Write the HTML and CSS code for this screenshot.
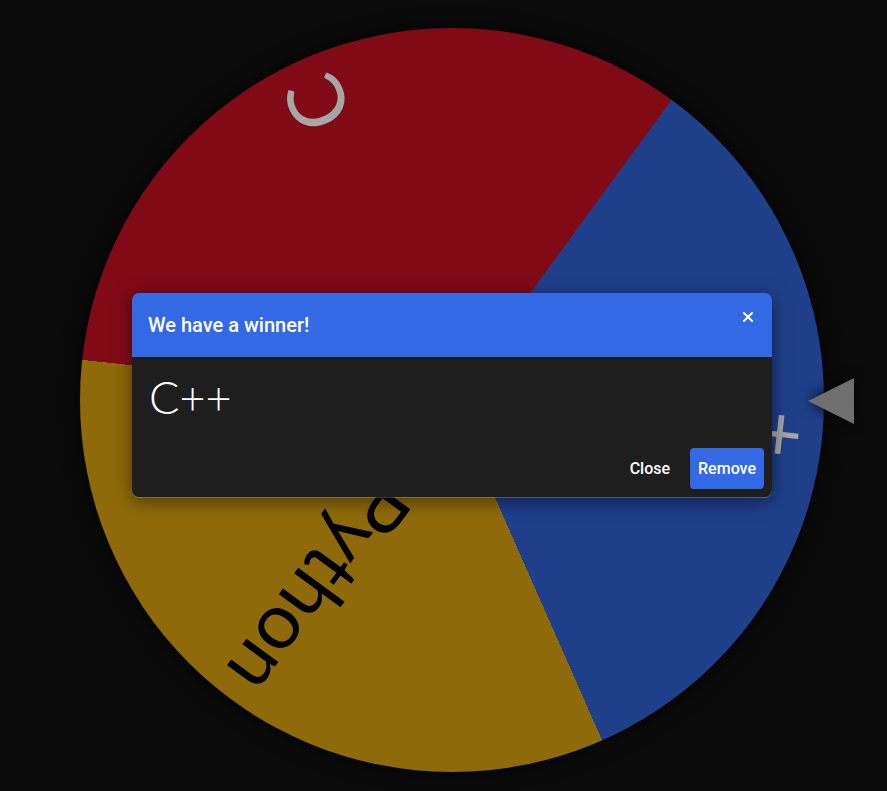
FILE: index.html
```html
<!DOCTYPE html>
<html lang="en">
<head>
<meta charset="utf-8">
<title>Wheel</title>
<link rel="stylesheet" href="styles.css">
</head>
<body>
<main class="stage">
  <div class="wheel">
    <div class="label label-red"><span>C</span></div>
    <div class="label label-blue"><span>C++</span></div>
    <div class="label label-yellow"><span>Python</span></div>
  </div>
  <svg class="pointer" width="48" height="50" viewBox="0 0 48 50">
    <polygon points="1,25 47,2 47,48" fill="#6f6f6f"/>
  </svg>
</main>

<div class="modal">
  <section class="dialog">
    <header class="dialog-header">
      <h2 class="dialog-title">We have a winner!</h2>
      <button class="dialog-x" aria-label="Close">
        <svg width="10" height="10" viewBox="0 0 10 10"><path d="M1 1L9 9M9 1L1 9" stroke="#fff" stroke-width="2" stroke-linecap="square"/></svg>
      </button>
    </header>
    <div class="dialog-body">C++</div>
    <footer class="dialog-footer">
      <button class="btn btn-text">Close</button>
      <button class="btn btn-primary">Remove</button>
    </footer>
  </section>
</div>
</body>
</html>
```
FILE: styles.css
```css
html, body {
  margin: 0;
  padding: 0;
  background: #0b0b0b;
  width: 887px;
  height: 791px;
  overflow: hidden;
}

.stage {
  display: flex;
  align-items: center;
  padding: 28px 0 0 80px;
}

.wheel {
  position: relative;
  flex: none;
  width: 744px;
  height: 744px;
  border-radius: 50%;
  background: conic-gradient(from 36.2deg,
    #1f3f8b 0deg 120deg,
    #8e6a0a 120deg 240deg,
    #800a16 240deg 360deg);
  box-shadow: 0 0 18px 2px rgba(0, 0, 0, 0.7);
  overflow: hidden;
}

.label {
  position: absolute;
  left: 50%;
  top: 50%;
  width: 352px;
  height: 0;
  transform-origin: 0 0;
  display: flex;
  justify-content: flex-end;
  align-items: center;
  font-family: "Lato", "DejaVu Sans", sans-serif;
  font-weight: 400;
  font-size: 78px;
  line-height: 1;
}

.label span {
  white-space: nowrap;
  margin-top: -10px;
}

.label-red { transform: rotate(-113.8deg); color: #a6a6a6; }
.label-blue { transform: rotate(6.2deg); color: #a6a6a6; }
.label-yellow { transform: rotate(126.2deg); color: #000; }

.pointer {
  flex: none;
  margin-left: -17px;
  margin-top: 2px;
  filter: drop-shadow(0 0 7px rgba(0, 0, 0, 0.9));
}

.modal {
  position: absolute;
  left: 132px;
  top: 293px;
  width: 640px;
}

.dialog {
  border-radius: 7px;
  overflow: hidden;
  background: #1e1e1e;
  box-shadow: 0 1px 0 rgba(255, 255, 255, 0.22), 0 4px 18px rgba(0, 0, 0, 0.5);
  font-family: "Roboto", "Liberation Sans", sans-serif;
  color: #fff;
}

.dialog-header {
  display: flex;
  justify-content: space-between;
  align-items: center;
  height: 64px;
  padding: 0 16px;
  background: #3469e6;
}

.dialog-title {
  margin: 0;
  font-size: 20px;
  font-weight: 500;
  line-height: 24px;
}

.dialog-x {
  align-self: flex-start;
  margin: 19px 3px 0 0;
  padding: 0;
  width: 10px;
  height: 10px;
  border: 0;
  background: none;
  display: flex;
}

.dialog-body {
  padding: 15px 17px 18px;
  font-family: "Lato", "DejaVu Sans", sans-serif;
  font-weight: 300;
  font-size: 45px;
  line-height: 50px;
}

.dialog-footer {
  display: flex;
  justify-content: flex-end;
  gap: 12px;
  padding: 8px;
}

.btn {
  height: 41px;
  padding: 0 8px;
  border: 0;
  border-radius: 4px;
  font-family: "Roboto", "Liberation Sans", sans-serif;
  font-size: 16px;
  font-weight: 500;
  color: #fff;
  background: none;
}

.btn-primary {
  background: #3469e6;
}
```
